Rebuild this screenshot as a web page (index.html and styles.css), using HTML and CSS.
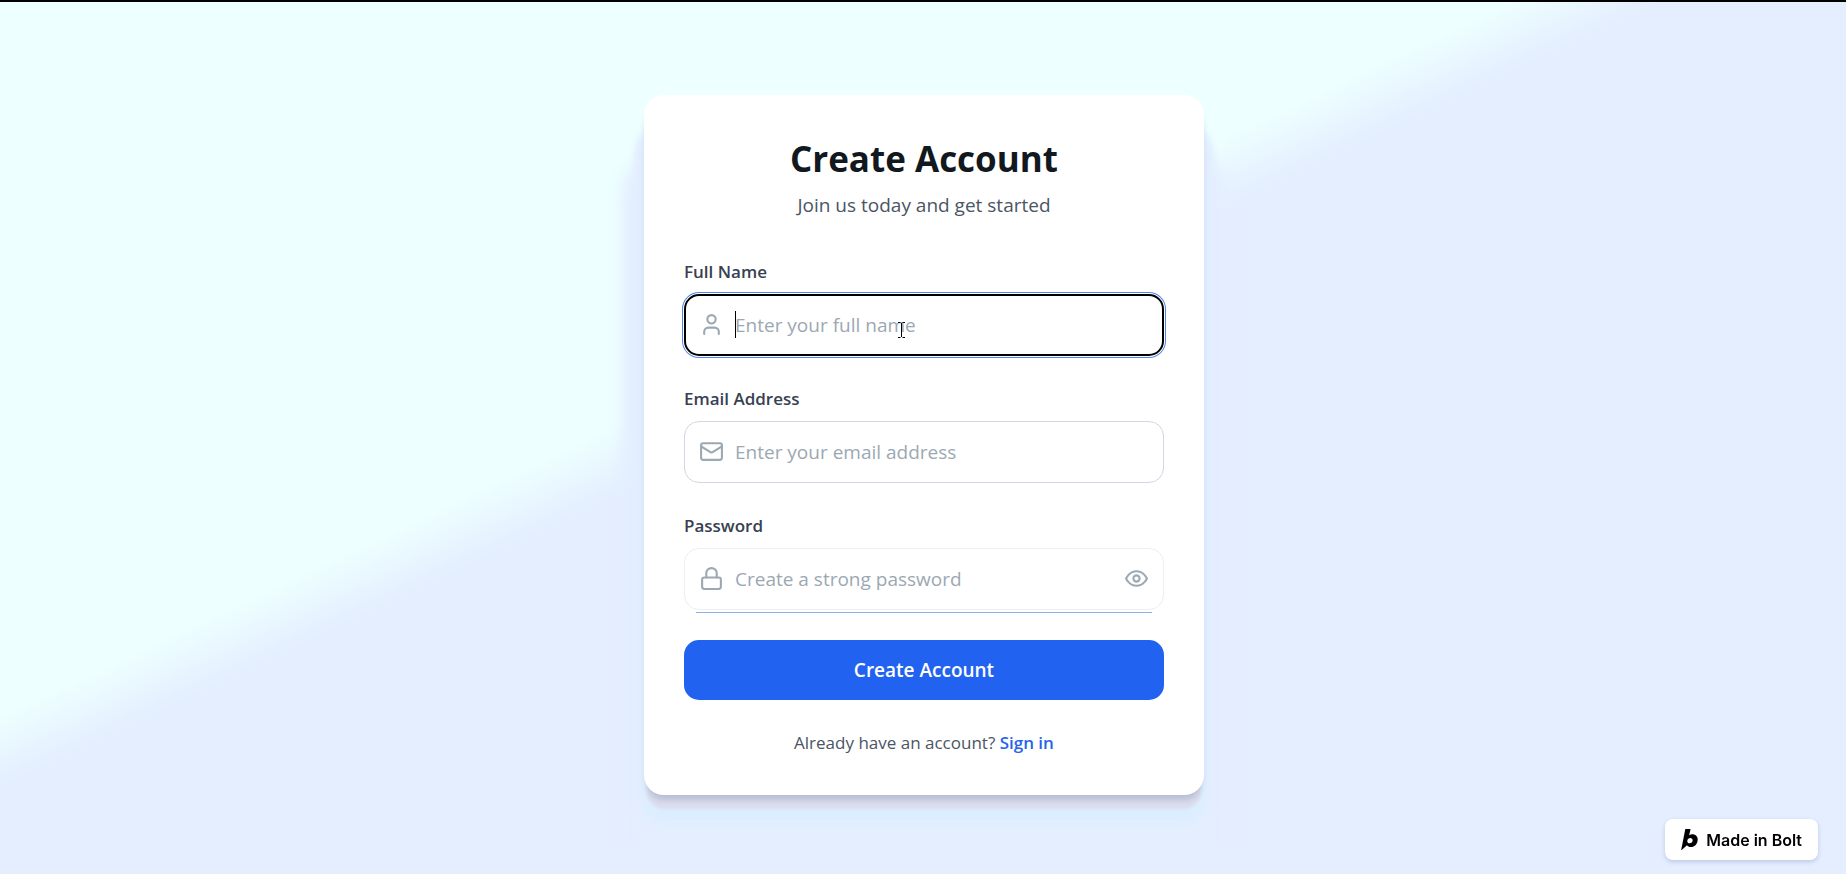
FILE: index.html
```html
<!DOCTYPE html>
<html lang="en">
<head>
    <meta charset="UTF-8">
    <meta name="viewport" content="width=device-width, initial-scale=1.0">
    <title>Create Account</title>
    <link rel="stylesheet" href="styles.css">
</head>
<body>
    <main class="card">
        <div class="header">
            <h1>Create Account</h1>
            <p>Join us today and get started</p>
        </div>

        <form class="signup-form">
            <div class="field">
                <label for="name">Full Name</label>
                <div class="input-wrap">
                    <svg class="icon" viewBox="0 0 24 24"><path d="M19 21v-2a4 4 0 0 0-4-4H9a4 4 0 0 0-4 4v2"/><circle cx="12" cy="7" r="4"/></svg>
                    <input class="focused" type="text" id="name" placeholder="Enter your full name">
                    <span class="caret"></span>
                    <svg class="pointer" viewBox="0 0 7 16"><path d="M0 .5h2.500M4.500.5H7M3.500 1v14M0 15.500h2.500M4.500 15.500H7"/></svg>
                </div>
            </div>

            <div class="field">
                <label for="email">Email Address</label>
                <div class="input-wrap">
                    <svg class="icon" viewBox="0 0 24 24"><rect width="20" height="16" x="2" y="4" rx="2"/><path d="m22 7-8.970 5.700a1.940 1.940 0 0 1-2.060 0L2 7"/></svg>
                    <input type="email" id="email" placeholder="Enter your email address">
                </div>
            </div>

            <div class="field">
                <label for="password">Password</label>
                <div class="input-wrap password-wrap">
                    <svg class="icon" viewBox="0 0 24 24"><rect width="18" height="11" x="3" y="11" rx="2"/><path d="M7 11V7a5 5 0 0 1 10 0v4"/></svg>
                    <input type="password" id="password" placeholder="Create a strong password">
                    <button class="toggle" type="button" aria-label="Show password">
                        <svg viewBox="0 0 24 24"><path d="M2 12s3-7 10-7 10 7 10 7-3 7-10 7-10-7-10-7Z"/><circle cx="12" cy="12" r="3"/></svg>
                    </button>
                </div>
            </div>

            <button class="submit" type="submit">Create Account</button>
        </form>

        <p class="signin">Already have an account? <a href="#">Sign in</a></p>
    </main>

    <a class="badge" href="#">
        <svg viewBox="0 0 16 20"><path fill-rule="evenodd" d="M4 0h5L7.700 6C8.600 5.200 9.600 4.900 10.700 4.900c3 0 5.100 2 5.100 5 0 4-2.800 7.300-6.500 7.300-1.700 0-3-.6-3.700-1.700L0 20.500zM8.800 8.500c-1.700 0-2.900 1.300-2.900 2.900 0 1.300.9 2.200 2.200 2.200 1.700 0 2.900-1.300 2.900-2.900 0-1.300-.9-2.200-2.200-2.200z"/></svg>
        Made in Bolt
    </a>
</body>
</html>
```
FILE: styles.css
```css
* {
    box-sizing: border-box;
    margin: 0;
    padding: 0;
}

body {
    min-height: 100vh;
    display: flex;
    justify-content: center;
    align-items: center;
    padding: 33px 20px 20px 22px;
    border-top: 2px solid #000000;
    background: linear-gradient(to bottom right, #edffff 41%, #e4eeff 45%);
    font-family: 'Segoe UI', 'Open Sans', sans-serif;
    color: #111820;
}

.card {
    width: 560px;
    max-width: 100%;
    padding: 40px;
    background-color: white;
    border-radius: 20px;
    box-shadow: 0 8px 6px -3px rgba(100, 115, 150, 0.3),
        0 17px 3px -3px #dddeee,
        0 26px 12px 0 #daeeff,
        0 40px 6px 10px #e4eeff,
        0 80px 16px 22px #e4eeff;
}

.header {
    text-align: center;
    margin-bottom: 40px;
}

.header h1 {
    font-size: 35px;
    line-height: 48px;
    font-weight: 700;
    margin-bottom: 8px;
}

.header p {
    font-size: 19px;
    line-height: 28px;
    color: #4b5563;
}

.signup-form {
    display: flex;
    flex-direction: column;
    gap: 30px;
}

.field label {
    display: block;
    margin-bottom: 10px;
    font-size: 17px;
    line-height: 25px;
    font-weight: 600;
    color: #374151;
}

.input-wrap {
    position: relative;
}

.icon,
.toggle svg {
    width: 25px;
    height: 25px;
    fill: none;
    stroke: #9ca8b2;
    stroke-width: 2;
    stroke-linecap: round;
    stroke-linejoin: round;
}

.icon {
    position: absolute;
    left: 15px;
    top: 18px;
}

.input-wrap input {
    display: block;
    width: 100%;
    height: 62px;
    padding: 0 50px;
    border: 1px solid #d3d6e0;
    border-radius: 15px;
    background-color: white;
    font-family: inherit;
    font-size: 19px;
    color: #111820;
    outline: none;
}

.input-wrap input::placeholder {
    color: #9ca8b2;
}

.input-wrap input.focused {
    padding: 0 49px;
    border: 2px solid #000000;
    box-shadow: 0 0 0 1px white, 0 0 0 2px #4f86e8;
}

.input-wrap .caret {
    position: absolute;
    left: 51px;
    top: 17px;
    width: 1px;
    height: 27px;
    background-color: #000000;
}

.pointer {
    position: absolute;
    left: 214px;
    top: 28px;
    width: 7px;
    height: 16px;
    fill: none;
    stroke: #000000;
    stroke-width: 1;
}

.password-wrap input {
    border-color: #eceef2;
}

.password-wrap::after {
    content: "";
    position: absolute;
    left: 12px;
    right: 12px;
    bottom: -3px;
    height: 1px;
    background-color: #8fb0e0;
}

.toggle {
    position: absolute;
    right: 15px;
    top: 18px;
    height: 25px;
    border: none;
    background: none;
    cursor: pointer;
}

.submit {
    height: 60px;
    border: none;
    border-radius: 15px;
    background-color: #2163f0;
    color: white;
    font-family: inherit;
    font-size: 19px;
    font-weight: 600;
    cursor: pointer;
}

.signin {
    margin-top: 30px;
    text-align: center;
    font-size: 17px;
    line-height: 25px;
    color: #4b5563;
}

.signin a {
    color: #2563eb;
    font-weight: 600;
    text-decoration: none;
}

.badge {
    position: fixed;
    right: 28px;
    bottom: 14px;
    display: flex;
    align-items: center;
    gap: 8px;
    height: 41px;
    padding: 0 16px;
    border-radius: 8px;
    background-color: white;
    box-shadow: 0 2px 4px rgba(80, 90, 150, 0.25);
    font-family: Inter, sans-serif;
    font-size: 16px;
    font-weight: 600;
    color: #000000;
    text-decoration: none;
}

.badge svg {
    width: 17px;
    height: 21px;
}
```
